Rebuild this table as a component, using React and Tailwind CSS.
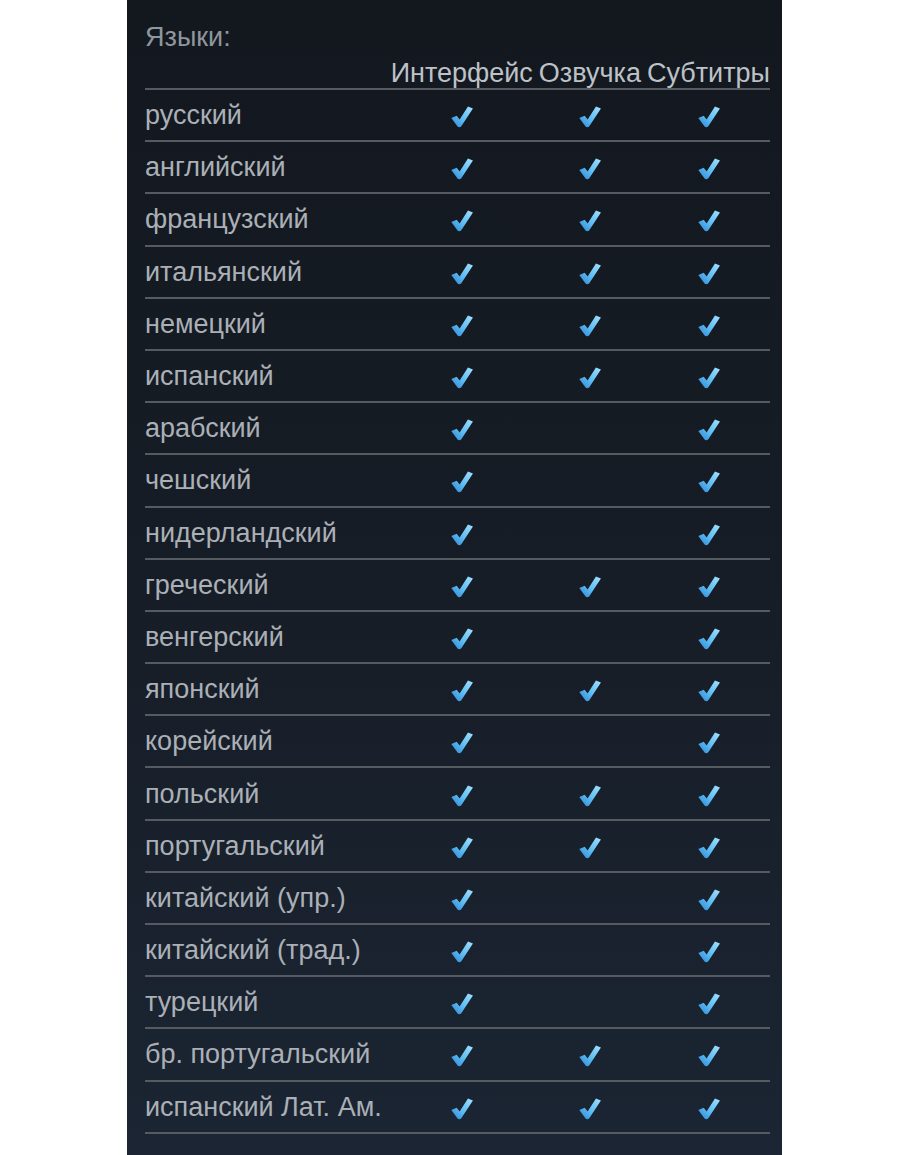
import React from "react";

const languages = [
  ["русский", true, true, true],
  ["английский", true, true, true],
  ["французский", true, true, true],
  ["итальянский", true, true, true],
  ["немецкий", true, true, true],
  ["испанский", true, true, true],
  ["арабский", true, false, true],
  ["чешский", true, false, true],
  ["нидерландский", true, false, true],
  ["греческий", true, true, true],
  ["венгерский", true, false, true],
  ["японский", true, true, true],
  ["корейский", true, false, true],
  ["польский", true, true, true],
  ["португальский", true, true, true],
  ["китайский (упр.)", true, false, true],
  ["китайский (трад.)", true, false, true],
  ["турецкий", true, false, true],
  ["бр. португальский", true, true, true],
  ["испанский Лат. Ам.", true, true, true],
];

function Check() {
  return (
    <svg width="25" height="23" viewBox="0 0 24 22" className="block mt-[3px]">
      <defs>
        <linearGradient id="chk" x1="1" y1="0" x2="0" y2="1">
          <stop offset="0" stopColor="#a3e0ff" />
          <stop offset="0.5" stopColor="#62c0f4" />
          <stop offset="1" stopColor="#2b86d6" />
        </linearGradient>
      </defs>
      <path
        d="M2.2 12.4 L7.4 10.2 L10.2 13.8 L18.2 1.4 L23 3.2 L11.8 20.4 Q10.2 21.8 8.4 20.8 Z"
        fill="url(#chk)"
      />
    </svg>
  );
}

function Cell({ on }) {
  return <div className="flex justify-center">{on ? <Check /> : null}</div>;
}

export default function App() {
  return (
    <div className="w-full h-[1155px] bg-white overflow-hidden font-['Liberation_Sans',Arial,sans-serif]">
      <div className="ml-[127px] w-[655px] h-full pl-[18px] pr-[12px] pt-[22px] bg-[linear-gradient(180deg,#13181f_0%,#161c25_45%,#1b2533_100%)]">
        <div className="text-[27px] leading-[30px] text-[#8f969e]">Языки:</div>

        <div className="mt-[6px] grid grid-cols-[1fr_auto_auto_auto] gap-x-[6px]">
          {/* Header */}
          <div className="col-span-4 grid grid-cols-subgrid h-[32px] border-b-2 border-[#565b61] text-[27px] leading-[30px] text-[#bcc2c8] whitespace-nowrap">
            <div></div>
            <div>Интерфейс</div>
            <div>Озвучка</div>
            <div>Субтитры</div>
          </div>

          {languages.map(([name, ui, voice, subs]) => (
            <div
              key={name}
              className="col-span-4 grid grid-cols-subgrid items-center h-[52.2px] border-b-2 border-[#565b61]"
            >
              <div className="text-[27px] leading-[30px] text-[#aab0b6] whitespace-nowrap">{name}</div>
              <Cell on={ui} />
              <Cell on={voice} />
              <Cell on={subs} />
            </div>
          ))}
        </div>
      </div>
    </div>
  );
}
